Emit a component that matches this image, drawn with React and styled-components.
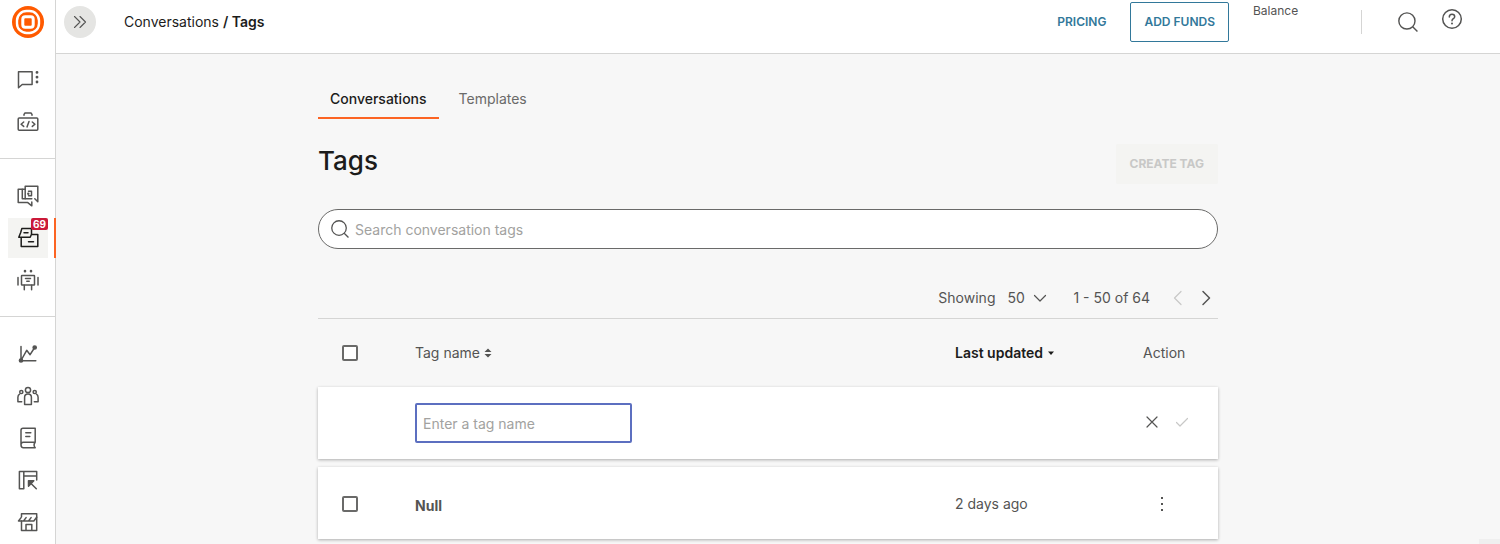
import { useState } from "react"
import styled, { createGlobalStyle, css } from "styled-components"

const GlobalStyle = createGlobalStyle`
    *, *::before, *::after {
        box-sizing: border-box;
    }
    body {
        margin: 0;
        background-color: #f7f7f7;
        color: #545453;
        font-family: Inter, "Liberation Sans", sans-serif;
        font-size: 14px;
        line-height: 20px;
    }
    button, input, select {
        font: inherit;
        color: inherit;
    }
`

const Page = styled.div`
    display: flex;
    height: 100vh;
    overflow: hidden;
`

const Sidebar = styled.nav`
    flex: none;
    width: 56px;
    background-color: white;
    border-right: 1px solid #d5d5d4;
`
const LogoLink = styled.a`
    display: block;
    height: 43px;
    padding: 6px 12px 0;
`
const NavGroup = styled.div`
    display: flex;
    flex-direction: column;
    gap: 2px;
    padding: 17px 0 16px 8px;

    & + & {
        border-top: 1px solid #d5d5d4;
    }
`
const NavLink = styled.a`
    position: relative;
    display: flex;
    align-items: center;
    justify-content: center;
    width: 40px;
    height: 40px;
    color: #545453;
    ${(props) => props.$active && css`
        background-color: #f4f4f2;
        color: #1c1c1b;

        &::after {
            content: "";
            position: absolute;
            top: 0;
            right: -8px;
            width: 2px;
            height: 100%;
            background-color: #fc6423;
        }
    `}
`
const Badge = styled.span`
    position: absolute;
    top: 0;
    right: 0;
    padding: 0 2px;
    border-radius: 2px;
    background-color: #cb1939;
    color: white;
    font-size: 10px;
    font-weight: 700;
    line-height: 12px;
`

const Body = styled.div`
    flex: 1;
    min-width: 0;
    display: flex;
    flex-direction: column;
`
const Header = styled.header`
    flex: none;
    display: flex;
    align-items: flex-start;
    justify-content: space-between;
    height: 54px;
    padding: 2px 28px 0 8px;
    background-color: white;
    border-bottom: 1px solid #d5d5d4;
`
const HeaderSide = styled.div`
    display: flex;
    align-items: flex-start;
`
const ExpandButton = styled.button`
    display: flex;
    align-items: center;
    justify-content: center;
    width: 32px;
    height: 32px;
    margin-top: 4px;
    padding: 0;
    border: none;
    border-radius: 50%;
    background-color: #e5e5e3;
    cursor: pointer;
`
const Breadcrumbs = styled.div`
    margin-left: 28px;
    color: #1c1c1b;
    line-height: 40px;

    a {
        color: inherit;
        text-decoration: none;
    }
    strong {
        font-weight: 600;
    }
`
const TextLink = styled.a`
    color: #32789a;
    font-size: 12px;
    font-weight: 600;
    line-height: 40px;
    text-decoration: none;
`
const Button = styled.button`
    height: 40px;
    padding: 0 13px;
    border: 1px solid #32789a;
    border-radius: 2px;
    background-color: white;
    color: #32789a;
    font-size: 12px;
    font-weight: 600;
    cursor: pointer;

    &:disabled {
        border-color: #f4f4f2;
        background-color: #f4f4f2;
        color: #c8c8c7;
        font-weight: 700;
        cursor: default;
    }
`
const Actions = styled.div`
    display: flex;
    gap: 24px;
`
const Balance = styled.span`
    width: 84px;
    font-size: 12px;
    line-height: 18px;
`
const Divider = styled.span`
    width: 1px;
    height: 24px;
    margin-top: 8px;
    background-color: #d5d5d4;
`
const HeaderIcons = styled.div`
    display: flex;
    align-items: flex-start;
    gap: 4px;
    margin-left: 26px;
`
const IconButton = styled.button`
    display: flex;
    align-items: center;
    justify-content: center;
    width: ${(props) => props.$width || 40}px;
    height: ${(props) => props.$height || 40}px;
    padding: 0;
    border: none;
    background: none;
    cursor: pointer;

    &:disabled {
        color: #c8c8c7;
        cursor: default;
    }
`

const Main = styled.main`
    flex: 1;
    padding: 25px 20px 0 0;
    overflow: hidden;
`
const Content = styled.div`
    max-width: 900px;
    margin: 0 auto;
`
const Tabs = styled.div`
    display: flex;
    gap: 8px;
`
const Tab = styled.button`
    height: 40px;
    padding: 2px 12px 0;
    border: none;
    border-bottom: 2px solid ${(props) => (props.$active ? "#fc6423" : "transparent")};
    background: none;
    color: ${(props) => (props.$active ? "#1c1c1b" : "#6a6a69")};
    font-weight: ${(props) => (props.$active ? 500 : 400)};
    cursor: pointer;
`
const TitleRow = styled.div`
    display: flex;
    align-items: flex-start;
    justify-content: space-between;
    margin: 25px 0;
`
const Title = styled.h1`
    margin: 0;
    color: #1c1c1b;
    font-size: 26px;
    font-weight: 500;
    line-height: 34px;
`
const SearchBox = styled.label`
    display: flex;
    align-items: center;
    gap: 6px;
    height: 40px;
    padding: 0 12px;
    border: 1px solid #6a6a69;
    border-radius: 20px;
    background-color: white;
`
const SearchInput = styled.input`
    flex: 1;
    padding: 2px 0 0;
    border: none;
    outline: none;
    background: none;

    &::placeholder {
        color: #a2a2a0;
    }
`

const Pager = styled.div`
    display: flex;
    align-items: center;
    justify-content: flex-end;
    height: 41px;
    margin-top: 29px;
    border-bottom: 1px solid #d5d5d4;
`
const PageSize = styled.label`
    display: flex;
    align-items: center;
    gap: 12px;
    margin-right: 24px;
`
const SelectWrap = styled.span`
    display: flex;
    align-items: center;

    svg {
        margin-left: -16px;
        pointer-events: none;
    }
`
const Select = styled.select`
    appearance: none;
    width: 42px;
    padding: 0;
    border: none;
    background: none;
`
const PageButtons = styled.div`
    display: flex;
    gap: 4px;
    margin-left: 16px;
`

const Table = styled.table`
    width: 100%;
    table-layout: fixed;
    border-collapse: separate;
    border-spacing: 0 8px;
`
const HeadCell = styled.th`
    width: ${(props) => props.$width || "auto"};
    height: 52px;
    padding: 0 0 0 ${(props) => (props.$check ? 24 : 0)}px;
    color: ${(props) => (props.$sorted ? "#1c1c1b" : "#545453")};
    font-weight: ${(props) => (props.$sorted ? 600 : 400)};
    text-align: left;
`
const SortButton = styled.button`
    display: flex;
    align-items: center;
    gap: 4px;
    padding: 0;
    border: none;
    background: none;
    font-weight: inherit;
    cursor: pointer;
`
const Row = styled.tr`
    background-color: white;
    box-shadow: 0 1px 3px rgba(0, 0, 0, 0.3);
`
const Cell = styled.td`
    height: 72px;
    padding: 2px 0 0 ${(props) => (props.$check ? 24 : 0)}px;
`
const EditCell = styled.td`
    height: 72px;
    padding: 0;
`
const TagName = styled.strong`
    display: block;
    padding-top: 4px;
    font-weight: 700;
`
const Checkbox = styled.input`
    appearance: none;
    display: block;
    width: 16px;
    height: 16px;
    margin: 0;
    border: 2px solid #6a6a69;
    border-radius: 2px;
    background-color: white;

    &:checked {
        background-color: #6a6a69;
    }
`
const NameInput = styled.input`
    width: 217px;
    height: 40px;
    padding: 0 6px;
    border: 2px solid #5c6fc0;
    border-radius: 2px;
    outline: none;
    background-color: white;

    &::placeholder {
        color: #a2a2a0;
    }
`
const RowActions = styled.div`
    display: flex;
    gap: 12px;
    padding-bottom: 2px;
`
const StatusCorner = styled.div`
    position: fixed;
    right: 0;
    bottom: 0;
    width: 21px;
    height: 5px;
    background-color: #efefef;
`

const Icon = ({ size = 24, stroke = 1.5, children }) => (
    <svg
        width={size}
        height={size}
        viewBox={`0 0 ${size} ${size}`}
        fill="none"
        stroke="currentColor"
        strokeWidth={stroke}
        strokeLinecap="round"
        strokeLinejoin="round"
        aria-hidden="true"
    >
        {children}
    </svg>
)

const Logo = () => (
    <svg width="32" height="32" viewBox="0 0 32 32" aria-hidden="true">
        <circle cx="16" cy="16" r="16" fill="#ff5a00" />
        <rect x="5" y="5" width="22" height="22" rx="9.5" fill="none" stroke="white" strokeWidth="2.4" />
        <rect x="10.8" y="10.8" width="10.4" height="10.4" rx="2.4" fill="none" stroke="white" strokeWidth="3" />
    </svg>
)

const SearchIcon = ({ size }) => (
    <svg width={size} height={size} viewBox="0 0 24 24" fill="none" stroke="currentColor" strokeWidth="1.7" aria-hidden="true">
        <circle cx="10.7" cy="10.7" r="9.7" />
        <path d="M17.6 17.6l5.700 5.700" />
    </svg>
)

const navGroups = [
    [
        {
            label: "Conversations",
            icon: (
                <>
                    <path d="M2.5 3.800h13.600v12.700H6.200L2.500 19.800z" />
                    <path d="M21 4.300v.1M21 9.100v.1M21 13.900v.1" strokeWidth="2.800" />
                </>
            ),
        },
        {
            label: "Developer tools",
            icon: (
                <>
                    <rect x="2.2" y="8" width="19.6" height="12.3" rx="1" />
                    <path d="M8 5.2V4.400l1-1.400h6l1 1.400v.8" />
                    <path d="M7.700 12l-2.600 2.200 2.600 2.200M16.300 12l2.600 2.200-2.600 2.200M13 11.500l-2 5.400" />
                </>
            ),
        },
    ],
    [
        {
            label: "Answers",
            icon: (
                <>
                    <path d="M6.300 5.200H2.200v13.400h9.600l4 3.200V18" />
                    <path d="M15.800 14.800H9.200V2.300h12.600v15.400l-3-2.900" />
                    <path d="M9.200 5.200H6.300v9.600h2.900M12.500 7.300h3v4.500h-3" />
                    <path d="M12.300 9.600v.1" strokeWidth="2.400" />
                </>
            ),
        },
        {
            label: "Inbox",
            active: true,
            badge: 69,
            icon: (
                <>
                    <path d="M5.200 11.200V20.400h16.600V8.500H15.500V3.200l-.7-.6H5.800L4.700 6.500 2.800 11.200h11.400l1.200-2.700" />
                    <path d="M8 6.700h4M12.500 15.700h5" />
                </>
            ),
        },
        {
            label: "Bots",
            icon: (
                <>
                    <path d="M9 3.100v.1M15 3.100v.1" strokeWidth="2.600" />
                    <rect x="5.500" y="7.500" width="13" height="9.600" rx=".5" />
                    <path d="M8.300 17.200v4.600M15.600 17.200v4.600M2 9.500v7.500M22 9.500v7.500M9.500 10.500h5M10.800 13.200h2.400" />
                </>
            ),
        },
    ],
    [
        {
            label: "Analytics",
            icon: (
                <>
                    <path d="M5 4.500v14.200h14.800M5 18.500L10.700 8.300l3.400 4.400 4.600-7.200" />
                    <circle cx="5" cy="18.500" r="1.600" fill="currentColor" />
                    <circle cx="18.700" cy="5.500" r="1.600" fill="currentColor" />
                </>
            ),
        },
        {
            label: "People",
            icon: (
                <>
                    <circle cx="12" cy="6" r="2.600" />
                    <path d="M8.600 20.600v-7.300c0-2 1.400-3.300 3.400-3.300s3.400 1.300 3.400 3.300v7.300z" />
                    <circle cx="5.300" cy="8" r="1.600" />
                    <circle cx="18.700" cy="8" r="1.600" />
                    <path d="M3.600 10.200c-1.200.7-1.700 1.700-1.700 3v4.500h3.800M20.400 10.200c1.200.7 1.700 1.700 1.700 3v4.500h-3.800" />
                </>
            ),
        },
        {
            label: "Content",
            icon: (
                <>
                    <path d="M5 19V4.200C5 3 5.800 2.200 7 2.200h12.200v14H7.300C6 16.200 5 17.200 5 18.700s1 3 2.400 3h11.800c-1.500-1.800-1.500-3.700 0-5.500" />
                    <path d="M9.800 6.700h5M9.800 10.500h4" />
                </>
            ),
        },
        {
            label: "Forms",
            icon: (
                <>
                    <path d="M20.700 12V3.500H3.400v17.200h4.400V3.500M7.800 8h12.900M13.500 14l6.800 6.800" />
                    <path d="M12.500 12.800h5.300l-5.300 5.300z" fill="currentColor" />
                </>
            ),
        },
        {
            label: "Store",
            icon: (
                <>
                    <path d="M5.500 11v9.400h15.200V3.700H5.500v3M10 20.200v-5.700h5.800v5.700" />
                    <path d="M2.500 11h15.300l2.900-3.800M2.500 11l2.600-3.400M7.500 11l2.600-3.400M12.500 11l2.600-3.400" />
                </>
            ),
        },
    ],
]

const tags = [{ name: "Null", updated: "2 days ago" }]

const App = () => {
    const [tab, setTab] = useState("Conversations")

    return (
        <Page>
            <GlobalStyle />
            <Sidebar>
                <LogoLink href="#" aria-label="Home">
                    <Logo />
                </LogoLink>
                {navGroups.map((group, index) => (
                    <NavGroup key={index}>
                        {group.map((item) => (
                            <NavLink key={item.label} href="#" aria-label={item.label} $active={item.active}>
                                <Icon>{item.icon}</Icon>
                                {item.badge && <Badge>{item.badge}</Badge>}
                            </NavLink>
                        ))}
                    </NavGroup>
                ))}
            </Sidebar>
            <Body>
                <Header>
                    <HeaderSide>
                        <ExpandButton aria-label="Expand menu">
                            <Icon size={16} stroke={1.1}>
                                <path d="M2.500 2.500L8 8l-5.500 5.500M8 2.500L13.500 8 8 13.500" />
                            </Icon>
                        </ExpandButton>
                        <Breadcrumbs>
                            <a href="#">Conversations</a> <strong>/ Tags</strong>
                        </Breadcrumbs>
                    </HeaderSide>
                    <HeaderSide>
                        <Actions>
                            <TextLink href="#">PRICING</TextLink>
                            <Button>ADD FUNDS</Button>
                            <Balance>Balance</Balance>
                            <Divider />
                        </Actions>
                        <HeaderIcons>
                            <IconButton aria-label="Search">
                                <SearchIcon size={20} />
                            </IconButton>
                            <IconButton $height={34} aria-label="Help">
                                <Icon size={22}>
                                    <circle cx="11" cy="11" r="9.300" />
                                    <path d="M8.300 9c0-1.700 1.100-2.800 2.700-2.800s2.700 1 2.700 2.500c0 2-2.700 2-2.700 4" />
                                    <path d="M11 15.500v.1" strokeWidth="2" />
                                </Icon>
                            </IconButton>
                        </HeaderIcons>
                    </HeaderSide>
                </Header>
                <Main>
                    <Content>
                        <Tabs role="tablist">
                            {["Conversations", "Templates"].map((name) => (
                                <Tab
                                    key={name}
                                    role="tab"
                                    aria-selected={tab === name}
                                    $active={tab === name}
                                    onClick={() => setTab(name)}
                                >
                                    {name}
                                </Tab>
                            ))}
                        </Tabs>
                        <TitleRow>
                            <Title>Tags</Title>
                            <Button disabled>CREATE TAG</Button>
                        </TitleRow>
                        <SearchBox>
                            <SearchIcon size={18} />
                            <SearchInput aria-label="Search conversation tags" placeholder="Search conversation tags" />
                        </SearchBox>
                        <Pager>
                            <PageSize>
                                Showing
                                <SelectWrap>
                                    <Select defaultValue="50">
                                        <option>50</option>
                                        <option>100</option>
                                    </Select>
                                    <Icon size={16} stroke={1.2}>
                                        <path d="M1.500 5.500L7 11l5.500-5.500" />
                                    </Icon>
                                </SelectWrap>
                            </PageSize>
                            <span>1 - 50 of 64</span>
                            <PageButtons>
                                <IconButton $width={24} $height={24} aria-label="Previous page" disabled>
                                    <Icon size={16} stroke={1.2}>
                                        <path d="M11 1.500L4.500 8l6.500 6.500" />
                                    </Icon>
                                </IconButton>
                                <IconButton $width={24} $height={24} aria-label="Next page">
                                    <Icon size={16}>
                                        <path d="M5 1.500L11.500 8 5 14.500" />
                                    </Icon>
                                </IconButton>
                            </PageButtons>
                        </Pager>
                        <Table>
                            <thead>
                                <tr>
                                    <HeadCell $check $width="97px">
                                        <Checkbox type="checkbox" aria-label="Select all tags" />
                                    </HeadCell>
                                    <HeadCell>
                                        <SortButton>
                                            Tag name
                                            <svg width="8" height="10" viewBox="0 0 8 10" fill="currentColor" aria-hidden="true">
                                                <path d="M.5 4L4 .5 7.500 4zM.5 6h7L4 9.500z" />
                                            </svg>
                                        </SortButton>
                                    </HeadCell>
                                    <HeadCell $sorted $width="188px">
                                        <SortButton>
                                            Last updated
                                            <svg width="8" height="10" viewBox="0 0 8 10" fill="currentColor" aria-hidden="true">
                                                <path d="M1 3.500h6L4 7z" />
                                            </svg>
                                        </SortButton>
                                    </HeadCell>
                                    <HeadCell $width="75px">Action</HeadCell>
                                </tr>
                            </thead>
                            <tbody>
                                <Row>
                                    <EditCell />
                                    <EditCell>
                                        <NameInput aria-label="Tag name" placeholder="Enter a tag name" />
                                    </EditCell>
                                    <EditCell />
                                    <EditCell>
                                        <RowActions>
                                            <IconButton $width={18} $height={18} aria-label="Cancel">
                                                <Icon size={12} stroke={1.2}>
                                                    <path d="M1 1l10 10M11 1L1 11" />
                                                </Icon>
                                            </IconButton>
                                            <IconButton $width={18} $height={18} aria-label="Save tag" disabled>
                                                <Icon size={12} stroke={1.2}>
                                                    <path d="M.5 6.500L4 10l7.500-7.500" />
                                                </Icon>
                                            </IconButton>
                                        </RowActions>
                                    </EditCell>
                                </Row>
                                {tags.map((tag) => (
                                    <Row key={tag.name}>
                                        <Cell $check>
                                            <Checkbox type="checkbox" aria-label={`Select ${tag.name}`} />
                                        </Cell>
                                        <Cell>
                                            <TagName>{tag.name}</TagName>
                                        </Cell>
                                        <Cell>{tag.updated}</Cell>
                                        <Cell>
                                            <IconButton $width={38} aria-label={`Actions for ${tag.name}`}>
                                                <svg width="2" height="14" fill="currentColor" aria-hidden="true">
                                                    <path d="M0 0h2v2H0zM0 6h2v2H0zM0 12h2v2H0z" />
                                                </svg>
                                            </IconButton>
                                        </Cell>
                                    </Row>
                                ))}
                            </tbody>
                        </Table>
                    </Content>
                </Main>
            </Body>
            <StatusCorner />
        </Page>
    )
}

export default App
